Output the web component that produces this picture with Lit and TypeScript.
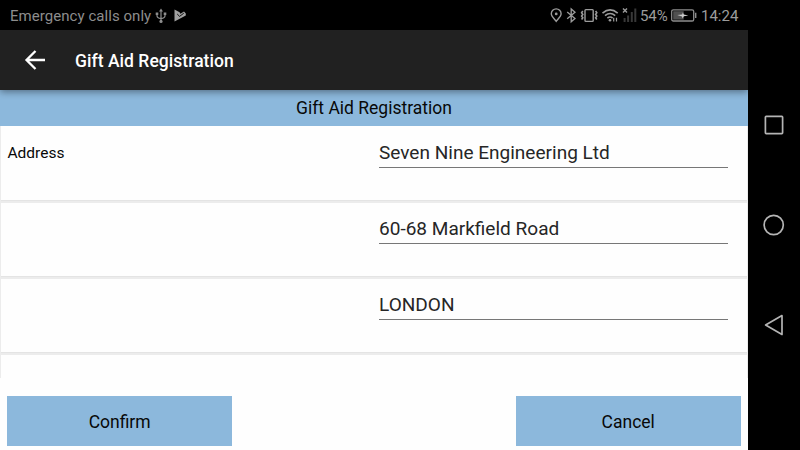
import { LitElement, html, css, svg } from "lit";
import { customElement } from "lit/decorators.js";

const usb = html`<svg class="usb" width="12" height="16" viewBox="0 0 12 16">
  <g fill="none" stroke="#8d8d8d" stroke-width="1.2">
    <path d="M6 2v11M2 5.5v2.2Q2 9.8 6 10.6M10 5.5v2.2Q10 9.8 6 10.6" />
  </g>
  <path fill="#8d8d8d" d="M6 .5 8 3.6H4zM.7 4.6h2.6v2.4H.7zM8.7 4.6h2.6v2.4H8.7z" />
  <circle cx="6" cy="13.4" r="1.6" fill="#8d8d8d" />
</svg>`;

const play = html`<svg class="play" width="12" height="13" viewBox="0 0 12 13">
  <path fill="#a0a0a0" d="M.5.6 5.6 3.2 6.4 4.8 10 2.4 11.8 4.6V6.4L.5 12.4z" />
  <path d="M3.2 5 5.6 7.4 9.8 4.2" fill="none" stroke="#000" stroke-width=".9" />
</svg>`;

const indicators = html`<svg width="87" height="20" viewBox="550 5 87 20">
  <g fill="none" stroke="#9c9c9c" stroke-width="1.4">
    <path d="M556.2 21.3C553.6 18.2 551.3 16.2 551.3 13.8a4.9 4.9 0 0 1 9.8 0C561.1 16.2 558.8 18.2 556.2 21.3z" />
    <path d="M567.2 12 575 18.6 571.2 21.8V9L575 12.2 567.2 18.8" stroke-width="1.3" />
    <rect x="585" y="9.6" width="8.2" height="11.8" rx=".8" />
    <path d="M582.8 11l-1.2 1.7 1.2 1.7-1.2 1.7 1.2 1.7-1.2 1.7M595.6 11l1.2 1.7-1.2 1.7 1.2 1.7-1.2 1.7 1.2 1.7" stroke-width="1.6" />
    <path d="M602.5 13.1q7.6-6.4 15.2 0M605 15.6q5.1-4.2 10.2 0M607.4 18.1q2.7-2.2 5.2 0" stroke-width="1.6" />
    <path d="M623 8.4l4 4M627 8.4l-4 4" stroke-width="1.4" />
  </g>
  <circle cx="556.2" cy="13.9" r="1.4" fill="#9c9c9c" />
  <circle cx="610" cy="20.2" r="1.3" fill="#9c9c9c" />
  <path d="M613.7 17.8v3.8M616.5 17.8v3.8" stroke="#9c9c9c" stroke-width="1.2" />
  <path d="M624.6 18v4M628.1 15.5v6.5M631.8 12v10M635.3 8.5v13.5" stroke="#383838" stroke-width="2" />
</svg>`;

const battery = html`<svg width="26" height="13" viewBox="0 0 26 13">
  <rect x=".7" y=".8" width="22" height="11.2" rx="1.6" fill="none" stroke="#8d8d8d" stroke-width="1.3" />
  <rect x="2.2" y="2.2" width="10.5" height="8.4" fill="#505050" />
  <path fill="#ccc" d="M6.2 6 11.2 5.4 11.8 3.4 12.8 5.4 17.4 6.5 12.8 7.2 11.6 9.4 11 7.4z" />
  <path d="M24.7 3.8v5.2" stroke="#8d8d8d" stroke-width="1.4" />
</svg>`;

const shapes = [
  svg`<rect x="3.4" y="4.4" width="17.2" height="17.2" rx=".8" />`,
  svg`<circle cx="11.7" cy="13" r="9.6" />`,
  svg`<path d="M3.6 13 20 3.6V22.4z" />`,
];

@customElement("app-root")
export class AppRoot extends LitElement {
  static styles = css`
    :host {
      display: flex;
      width: 800px;
      height: 450px;
      overflow: hidden;
      background: #000;
      font-family: Roboto, "Liberation Sans", sans-serif;
      color: #111;
    }
    svg { display: block; flex: none; }
    .screen { width: 748px; display: flex; flex-direction: column; background: #fefefe; }
    .status {
      height: 30px; box-sizing: border-box; background: #000; color: #8d8d8d;
      display: flex; align-items: center; padding: 2px 10px 0; font-size: 15px;
      line-height: 18px; white-space: nowrap;
    }
    .carrier { width: 141px; letter-spacing: 0.05px; }
    .usb { margin-left: 4px; margin-top: -1px; }
    .play { margin-left: 7px; margin-top: -2px; }
    .right { margin-left: auto; display: flex; align-items: center; color: #9c9c9c; }
    .right svg { margin-top: -2px; }
    .percent { width: 28px; margin-left: 3px; font-size: 15px; letter-spacing: -0.1px; }
    .battery { margin-left: 3px; }
    .clock { width: 37px; margin-left: 4px; font-size: 15px; }
    .appbar {
      height: 60px; flex: none; background: #212121; color: #fff; display: flex; align-items: center;
      box-shadow: 0 2px 7px rgba(0, 0, 0, 0.4); z-index: 1; font-size: 17.5px; font-weight: 500;
    }
    .title { padding-top: 2px; letter-spacing: 0.04px; }
    .back { margin-left: 24px; margin-right: 29px; }
    .heading {
      height: 36px; flex: none; background: #8cb8dc; text-align: center; line-height: 37px;
      font-size: 17.5px; box-sizing: border-box; color: #080808;
    }
    .rows { height: 252px; flex: none; overflow: hidden; border-left: 1px solid #ececec; border-right: 1px solid #ececec; box-sizing: border-box; }
    .row { height: 76px; display: flex; box-sizing: border-box; border-top: 2px solid #ececec; border-bottom: 1px solid #e4e4e4; }
    .row:first-child { border-top: 0; height: 75px; }
    .row:first-child .label, .row:first-child .field { margin-top: 11px; }
    .label { width: 371px; box-sizing: border-box; padding-left: 6.5px; font-size: 15.5px; line-height: 32px; margin-top: 10px; color: #080808; }
    .field {
      width: 349px; height: 31px; box-sizing: border-box; margin: 10px 0 0 7px; font-size: 19.05px;
      line-height: 32px; color: #262626; border-bottom: 1px solid #777; white-space: nowrap;
    }
    .actions { flex: 1; display: flex; justify-content: space-between; padding: 18px 7.5px 4px 7.4px; }
    .button {
      width: 224.5px; background: #8cb8dc; font-size: 17.5px; font-family: inherit; color: #080808;
      border: 0; padding: 2px 0 0;
    }
    .nav { width: 52px; display: flex; flex-direction: column; align-items: center; padding-top: 112px; gap: 75px; box-sizing: border-box; }
    .nav svg { fill: none; stroke: #b4b4b4; stroke-width: 1.7; stroke-linejoin: round; }
  `;

  render() {
    return html`
      <div class="screen">
        <div class="status">
          <span class="carrier">Emergency calls only</span>${usb}${play}
          <div class="right">
            ${indicators}<span class="percent">54%</span>
            <span class="battery">${battery}</span><span class="clock">14:24</span>
          </div>
        </div>
        <div class="appbar">
          <svg class="back" width="22" height="22" viewBox="0 0 22 22">
            <path d="M21 11H3M11.5 2 2.5 11 11.5 20" fill="none" stroke="#fff" stroke-width="2.3" />
          </svg>
          <span class="title">Gift Aid Registration</span>
        </div>
        <div class="heading">Gift Aid Registration</div>
        <div class="rows">
          ${[["Address", "Seven Nine Engineering Ltd"], ["", "60-68 Markfield Road"], ["", "LONDON"]].map(
            ([label, value]) => html`<div class="row"><div class="label">${label}</div><div class="field">${value}</div></div>`
          )}
          <div class="row"></div>
        </div>
        <div class="actions">
          <button class="button">Confirm</button>
          <button class="button">Cancel</button>
        </div>
      </div>
      <div class="nav">
        ${shapes.map((s) => html`<svg width="25" height="25" viewBox="0 0 25 25">${s}</svg>`)}
      </div>
    `;
  }
}
